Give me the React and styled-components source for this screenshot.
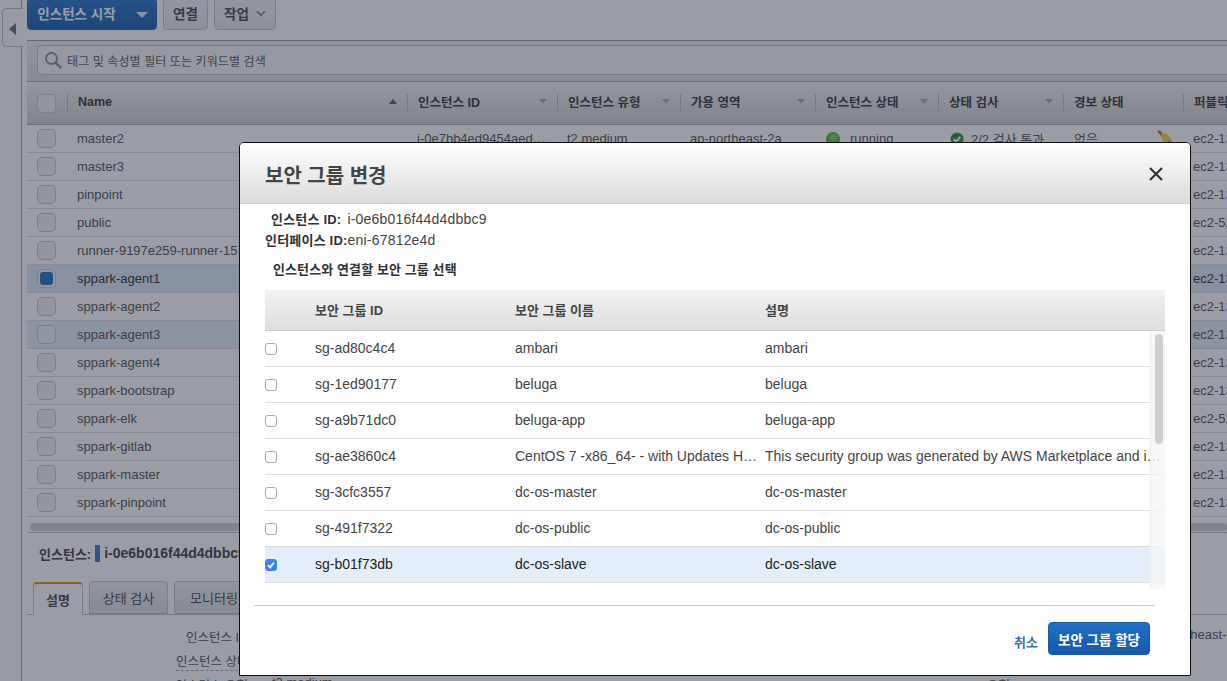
import React from "react"
import styled, { createGlobalStyle } from "styled-components"

const GlobalStyle = createGlobalStyle`
html, body {
    margin: 0;
    padding: 0;
    overflow: hidden;
    background: #fff;
    font-family: "Liberation Sans", "Noto Sans CJK KR", sans-serif;
    color: #444;
}
* { box-sizing: border-box; }
`;

const COLUMNS = "40px 340px 150px 123px 135px 123px 125px 120px 1fr";

const Page = styled.div`
position: relative;
display: flex;
width: 1227px;
height: 681px;
overflow: hidden;
background: #fff;
`;

const SideStrip = styled.div`
flex: 0 0 22px;
min-width: 0;
padding-top: 8px;
background: #fbfbfb;
border-right: 1px solid #aaa;
`;

const SideToggle = styled.div`
position: relative;
display: flex;
align-items: center;
width: 21px;
height: 39px;
margin-left: 2px;
padding-left: 6px;
background: #fbfbfb;
border: 1px solid #bbb;
border-right: none;
border-radius: 5px 0 0 5px;
`;

const LeftTriangle = styled.span`
width: 0;
height: 0;
margin-top: 2px;
border-top: 6px solid transparent;
border-bottom: 6px solid transparent;
border-right: 7px solid #666;
`;

const Main = styled.div`
flex: 1;
min-width: 0;
padding-left: 5px;
`;

const Toolbar = styled.div`
display: flex;
align-items: flex-end;
gap: 6px;
height: 31px;
padding-bottom: 1px;
`;

const StartButton = styled.div`
display: flex;
align-items: center;
height: 32px;
width: 130px;
color: #fff;
font-size: 13.5px;
font-weight: bold;
background: linear-gradient(#2070c8, #1459ab);
border: 1px solid #1a5aa5;
border-radius: 4px;
`;

const StartLabel = styled.span`
flex: 0 0 98px;
height: 100%;
line-height: 32px;
text-align: center;
border-right: 1px solid #2468b4;
`;

const StartCaret = styled.span`
width: 0;
height: 0;
margin: 2px 0 0 10px;
border-left: 6px solid transparent;
border-right: 6px solid transparent;
border-top: 6px solid #d8e6f5;
`;

const ToolButton = styled.div`
display: flex;
align-items: center;
justify-content: center;
gap: 7px;
height: 32px;
width: ${p => p.$width}px;
padding-bottom: 2px;
font-size: 13.5px;
font-weight: bold;
color: #444;
background: linear-gradient(#f4f4f4, #e6e6e6);
border: 1px solid #c4c4c4;
border-radius: 4px;
`;

const SearchPanel = styled.div`
display: flex;
align-items: flex-start;
height: 42px;
margin-top: 9px;
padding: 4px 0 0 10px;
background: linear-gradient(#efefef, #dddddd);
border-top: 1px solid #999;
border-bottom: 1px solid #aaa;
`;

const SearchInput = styled.div`
display: flex;
align-items: center;
gap: 5px;
width: 100%;
height: 30px;
padding-left: 6px;
font-size: 12px;
letter-spacing: 0.1px;
color: #555;
background: #f7f7f7;
border: 1px solid #c8c8c8;
border-right: none;
border-radius: 4px 0 0 4px;
`;

const HeaderRow = styled.div`
display: grid;
grid-template-columns: ${COLUMNS};
height: 43px;
background: linear-gradient(#f3f3f3, #cfcfcf);
border-bottom: 1px solid #aaa;
`;

const HeaderCell = styled.div`
position: relative;
display: flex;
align-items: center;
justify-content: space-between;
padding: 0 10px 3px 11px;
font-size: 12.5px;
font-weight: bold;
color: #333;
white-space: nowrap;
&::before {
    content: "";
    position: absolute;
    left: 0;
    top: 12px;
    bottom: 12px;
    width: 1px;
    background: #bbb;
}
`;

const CheckCell = styled.div`
display: flex;
align-items: center;
padding-left: 10px;
`;

const SortArrow = styled.span`
width: 0;
height: 0;
border-left: 4px solid transparent;
border-right: 4px solid transparent;
${p => p.$up ? "border-bottom: 5px solid #555;" : "border-top: 5px solid #aaa;"}
`;

const BigCheck = styled.span`
display: flex;
align-items: center;
justify-content: center;
width: 19px;
height: 19px;
background: #f1f1f1;
border: 1px solid #c6c6c6;
border-radius: 5px;
`;

const BigCheckFill = styled.span`
width: 13px;
height: 13px;
background: #1f6cc4;
border-radius: 3px;
`;

const Row = styled.div`
display: grid;
grid-template-columns: ${COLUMNS};
height: 28px;
font-size: 13px;
background: ${p => p.$selected === 2 ? "#dbe9f4" : p.$selected === 1 ? "#e2eef7" : "#fff"};
color: ${p => p.$selected === 2 ? "#2a2a2a" : "#4c4c4c"};
border-bottom: 1px solid #dcdcdc;
`;

const Cell = styled.div`
display: flex;
align-items: center;
gap: ${p => p.$gap || 0}px;
padding-left: ${p => p.$pad || 10}px;
white-space: nowrap;
overflow: hidden;
`;

const AlarmCell = styled(Cell)`
justify-content: space-between;
padding-right: 9px;
`;

const StatusDot = styled.span`
flex: none;
width: 14px;
height: 14px;
border-radius: 50%;
background: radial-gradient(circle at 50% 35%, #7fdc5a, #2f9a1e 75%);
`;

const ScrollTrack = styled.div`
height: 13px;
margin-top: 2px;
padding: 4px 0 0 3px;
`;

const ScrollThumb = styled.div`
width: 100%;
height: 8px;
background: #d0d0d0;
border-radius: 4px;
`;

const BottomPanel = styled.div`
border-top: 1px solid #bbb;
`;

const InstanceLine = styled.div`
display: flex;
align-items: center;
gap: 4px;
height: 40px;
padding: 0 0 0 12px;
font-size: 13px;
font-weight: bold;
color: #3c3c3c;
white-space: nowrap;
`;

const InstanceBar = styled.span`
width: 5px;
height: 17px;
background: #2f78c0;
`;

const InstanceId = styled.span`
font-size: 14px;
`;

const Tabs = styled.div`
display: flex;
align-items: flex-end;
gap: 6px;
height: 42px;
padding-left: 6px;
border-bottom: 1px solid #bbb;
`;

const Tab = styled.div`
display: flex;
align-items: center;
justify-content: center;
width: ${p => p.$width}px;
height: 33px;
margin-bottom: ${p => p.$active ? "-1px" : "0"};
font-size: 13px;
font-weight: ${p => p.$active ? "bold" : "normal"};
color: #444;
background: ${p => p.$active ? "#fff" : "linear-gradient(#f0f0f0, #dcdcdc)"};
border: 1px solid #c4c4c4;
border-top: ${p => p.$active ? "2px solid #e68a00" : "1px solid #c4c4c4"};
border-bottom: ${p => p.$active ? "none" : "1px solid #c4c4c4"};
border-radius: 4px 4px 0 0;
`;

const DetailGrid = styled.div`
display: grid;
grid-template-columns: 221px 673px 89px 1fr;
padding-top: 10px;
font-size: 13px;
color: #4c4c4c;
white-space: nowrap;
`;

const DetailLabel = styled.div`
height: ${p => p.$height}px;
padding-top: ${p => p.$top || 2}px;
font-size: 12.5px;
text-align: right;
${p => p.$dashed && "margin-left: 149px; border-bottom: 1px dashed #aaa;"}
`;

const DetailValue = styled.div`
padding: ${p => p.$top || 2}px 0 0 24px;
`;

const RightValue = styled.div`
padding: ${p => p.$top || 2}px 0 0 139px;
`;

const Overlay = styled.div`
position: absolute;
inset: 0;
background: rgba(44, 50, 67, 0.48);
`;

const Dialog = styled.div`
position: absolute;
left: 239px;
top: 142px;
display: flex;
flex-direction: column;
width: 952px;
height: 534px;
background: #fff;
border: 1px solid #111;
border-radius: 5px 5px 0 0;
`;

const DialogHeader = styled.div`
display: flex;
flex: none;
align-items: center;
justify-content: space-between;
height: 61px;
padding: 2px 27px 0 25px;
background: linear-gradient(#fff, #dbdbdb);
border-bottom: 1px solid #ccc;
border-radius: 4px 4px 0 0;
`;

const DialogTitle = styled.div`
font-size: 20px;
font-weight: bold;
color: #444;
`;

const DialogBody = styled.div`
flex: 1;
padding: 4px 25px 0;
`;

const InfoLine = styled.div`
display: flex;
align-items: center;
height: 21px;
padding-left: ${p => p.$indent}px;
font-size: 14px;
letter-spacing: 0.2px;
color: #444;
`;

const InfoLabel = styled.b`
font-size: 13px;
margin-right: ${p => p.$gap || 0}px;
color: #333;
`;

const SectionLabel = styled.div`
height: 22px;
margin-top: 8px;
padding: 3px 0 0 8px;
font-size: 13px;
letter-spacing: 0.1px;
line-height: 18px;
font-weight: bold;
color: #333;
`;

const GroupHeader = styled.div`
display: grid;
grid-template-columns: 50px 200px 250px 400px;
align-items: center;
height: 41px;
margin-top: 10px;
padding-bottom: 2px;
font-size: 13px;
font-weight: bold;
color: #444;
background: linear-gradient(#f2f2f2, #dedede);
border-bottom: 1px solid #ccc;
`;

const GroupScroll = styled.div`
position: relative;
height: 258px;
overflow: hidden;
`;

const GroupRow = styled.div`
display: grid;
grid-template-columns: 50px 200px 250px 400px;
align-items: center;
height: 36px;
padding-bottom: 2px;
font-size: 14px;
color: ${p => p.$checked ? "#222" : "#444"};
background: ${p => p.$checked ? "#e4eefb" : "#fff"};
border-bottom: 1px solid #ddd;
`;

const GroupCell = styled.div`
padding-right: ${p => p.$pad || 8}px;
white-space: nowrap;
overflow: hidden;
text-overflow: ellipsis;
`;

const Check = styled.span`
display: flex;
align-items: center;
justify-content: center;
width: 12px;
height: 12px;
margin-top: 2px;
background: ${p => p.$checked ? "#3a82f6" : "#fff"};
border: 1px solid ${p => p.$checked ? "#3a82f6" : "#a9a9a9"};
border-radius: 3px;
`;

const Track = styled.div`
position: absolute;
top: 0;
right: 0;
bottom: 0;
width: 15px;
padding: 3px 0 0 4px;
background: rgba(246, 246, 246, 0.75);
border-left: 1px solid #eee;
`;

const Thumb = styled.div`
width: 8px;
height: 110px;
background: #cfcfcf;
border-radius: 4px;
`;

const FooterLine = styled.div`
flex: none;
height: 1px;
margin: 0 35px 0 14px;
background: #ccc;
`;

const DialogFooter = styled.div`
display: flex;
flex: none;
align-items: flex-start;
justify-content: flex-end;
gap: 10px;
height: 69px;
padding: 16px 40px 0 0;
`;

const CancelLink = styled.span`
margin-top: 10px;
font-size: 13px;
font-weight: bold;
color: #3f6fc0;
`;

const PrimaryButton = styled.div`
display: flex;
align-items: center;
justify-content: center;
width: 102px;
height: 33px;
font-size: 13.5px;
font-weight: bold;
color: #fff;
background: linear-gradient(#2070c8, #1459ab);
border: 1px solid #1a5aa5;
border-radius: 4px;
`;

const SearchIcon = () => (
    <svg width="18" height="18" viewBox="0 0 18 18" fill="none">
        <circle cx="7.5" cy="7.5" r="5.5" stroke="#8a8a8a" strokeWidth="1.8" />
        <path d="M11.5 11.5L16.5 16.5" stroke="#8a8a8a" strokeWidth="2.4" strokeLinecap="round" />
    </svg>
);

const ChevronDown = () => (
    <svg width="10" height="7" viewBox="0 0 10 7" fill="none">
        <path d="M1 1.2L5 5.2L9 1.2" stroke="#777" strokeWidth="1.6" />
    </svg>
);

const CheckBadge = () => (
    <svg width="14" height="14" viewBox="0 0 14 14" style={{ flex: "none" }}>
        <circle cx="7" cy="7" r="6.5" fill="#1f8a3a" />
        <path d="M3.6 7.2L6 9.6L10.4 4.8" fill="none" stroke="#fff" strokeWidth="2" />
    </svg>
);

const BellIcon = () => (
    <svg width="18" height="18" viewBox="0 0 18 18" style={{ flex: "none" }}>
        <path d="M1 1L4 0.5L7 4L5 6Z" fill="#a87a20" />
        <path d="M5 4.5L10 3.5C13 5 15 9 16.5 11.5L8 14C7 10 5 7 5 4.5Z" fill="#f5d327" />
        <path d="M12 11H14V13H16V15H14V17H12V15H10V13H12Z" fill="#2fa32f" />
    </svg>
);

const SmallTick = () => (
    <svg width="10" height="10" viewBox="0 0 10 10" fill="none">
        <path d="M2 5.2L4.2 7.4L8 2.6" stroke="#fff" strokeWidth="1.7" />
    </svg>
);

const CloseIcon = () => (
    <svg width="14" height="14" viewBox="0 0 14 14" fill="none">
        <path d="M1 1L13 13M13 1L1 13" stroke="#333" strokeWidth="2.2" />
    </svg>
);

const columns = [
    { label: "Name", arrow: "up" },
    { label: "인스턴스 ID", arrow: "down" },
    { label: "인스턴스 유형", arrow: "down" },
    { label: "가용 영역", arrow: "down" },
    { label: "인스턴스 상태", arrow: "down" },
    { label: "상태 검사", arrow: "down" },
    { label: "경보 상태" },
    { label: "퍼블릭 DNS" },
];

const instances = [
    { name: "master2", dns: "ec2-13", full: true },
    { name: "master3", dns: "ec2-13" },
    { name: "pinpoint", dns: "ec2-13" },
    { name: "public", dns: "ec2-52" },
    { name: "runner-9197e259-runner-15", dns: "ec2-13" },
    { name: "sppark-agent1", dns: "ec2-13", selected: 2 },
    { name: "sppark-agent2", dns: "ec2-13" },
    { name: "sppark-agent3", dns: "ec2-13", selected: 1 },
    { name: "sppark-agent4", dns: "ec2-13" },
    { name: "sppark-bootstrap", dns: "ec2-13" },
    { name: "sppark-elk", dns: "ec2-52" },
    { name: "sppark-gitlab", dns: "ec2-13" },
    { name: "sppark-master", dns: "ec2-13" },
    { name: "sppark-pinpoint", dns: "ec2-13" },
];

const groups = [
    { id: "sg-ad80c4c4", name: "ambari", desc: "ambari" },
    { id: "sg-1ed90177", name: "beluga", desc: "beluga" },
    { id: "sg-a9b71dc0", name: "beluga-app", desc: "beluga-app" },
    {
        id: "sg-ae3860c4",
        name: "CentOS 7 -x86_64- - with Updates HVM-1602-AutogenByAWSMP-",
        desc: "This security group was generated by AWS Marketplace and is based on recommended settings",
    },
    { id: "sg-3cfc3557", name: "dc-os-master", desc: "dc-os-master" },
    { id: "sg-491f7322", name: "dc-os-public", desc: "dc-os-public" },
    { id: "sg-b01f73db", name: "dc-os-slave", desc: "dc-os-slave", checked: true },
];

const App = () => {
    return (
        <Page>
            <GlobalStyle />
            <SideStrip>
                <SideToggle><LeftTriangle /></SideToggle>
            </SideStrip>
            <Main>
                <Toolbar>
                    <StartButton>
                        <StartLabel>인스턴스 시작</StartLabel>
                        <StartCaret />
                    </StartButton>
                    <ToolButton $width={45}>연결</ToolButton>
                    <ToolButton $width={62}>작업 <ChevronDown /></ToolButton>
                </Toolbar>
                <SearchPanel>
                    <SearchInput>
                        <SearchIcon />
                        태그 및 속성별 필터 또는 키워드별 검색
                    </SearchInput>
                </SearchPanel>
                <HeaderRow>
                    <CheckCell><BigCheck /></CheckCell>
                    {columns.map(col => (
                        <HeaderCell key={col.label}>
                            {col.label}
                            {col.arrow && <SortArrow $up={col.arrow === "up"} />}
                        </HeaderCell>
                    ))}
                </HeaderRow>
                {instances.map(inst => (
                    <Row key={inst.name} $selected={inst.selected}>
                        <CheckCell>
                            <BigCheck>{inst.selected === 2 && <BigCheckFill />}</BigCheck>
                        </CheckCell>
                        <Cell>{inst.name}</Cell>
                        <Cell>{inst.full && "i-0e7bb4ed9454aed…"}</Cell>
                        <Cell>{inst.full && "t2.medium"}</Cell>
                        <Cell>{inst.full && "ap-northeast-2a"}</Cell>
                        <Cell $gap={10} $pad={11}>{inst.full && <><StatusDot />running</>}</Cell>
                        <Cell $gap={7} $pad={12}>{inst.full && <><CheckBadge />2/2 검사 통과</>}</Cell>
                        <AlarmCell $pad={11}>
                            {inst.full && <>없음<BellIcon /></>}
                        </AlarmCell>
                        <Cell>{inst.dns}</Cell>
                    </Row>
                ))}
                <ScrollTrack><ScrollThumb /></ScrollTrack>
                <BottomPanel>
                    <InstanceLine>
                        인스턴스:
                        <InstanceBar />
                        <InstanceId>i-0e6b016f44d4dbbc9</InstanceId>
                    </InstanceLine>
                    <Tabs>
                        <Tab $active $width={50}>설명</Tab>
                        <Tab $width={79}>상태 검사</Tab>
                        <Tab $width={80}>모니터링</Tab>
                    </Tabs>
                    <DetailGrid>
                        <DetailLabel $height={24}>인스턴스 ID</DetailLabel>
                        <DetailValue>i-0e6b016f44d4dbbc9</DetailValue>
                        <span />
                        <RightValue>ap-northeast-2a</RightValue>
                        <DetailLabel $height={22} $dashed>인스턴스 상태</DetailLabel>
                        <DetailValue>running</DetailValue>
                        <span />
                        <span />
                        <DetailLabel $height={22} $top={4}>인스턴스 유형</DetailLabel>
                        <DetailValue $top={4}>t2.medium</DetailValue>
                        <DetailLabel $height={22} $top={4}>IP 유형</DetailLabel>
                        <span />
                    </DetailGrid>
                </BottomPanel>
            </Main>
            <Overlay />
            <Dialog>
                <DialogHeader>
                    <DialogTitle>보안 그룹 변경</DialogTitle>
                    <CloseIcon />
                </DialogHeader>
                <DialogBody>
                    <InfoLine $indent={6}>
                        <InfoLabel $gap={6}>인스턴스 ID:</InfoLabel>
                        i-0e6b016f44d4dbbc9
                    </InfoLine>
                    <InfoLine $indent={0}>
                        <InfoLabel>인터페이스 ID:</InfoLabel>
                        eni-67812e4d
                    </InfoLine>
                    <SectionLabel>인스턴스와 연결할 보안 그룹 선택</SectionLabel>
                    <GroupHeader>
                        <span />
                        <span>보안 그룹 ID</span>
                        <span>보안 그룹 이름</span>
                        <span>설명</span>
                    </GroupHeader>
                    <GroupScroll>
                        {groups.map(group => (
                            <GroupRow key={group.id} $checked={group.checked}>
                                <Check $checked={group.checked}>
                                    {group.checked && <SmallTick />}
                                </Check>
                                <GroupCell>{group.id}</GroupCell>
                                <GroupCell>{group.name}</GroupCell>
                                <GroupCell $pad={1}>{group.desc}</GroupCell>
                            </GroupRow>
                        ))}
                        <Track><Thumb /></Track>
                    </GroupScroll>
                </DialogBody>
                <FooterLine />
                <DialogFooter>
                    <CancelLink>취소</CancelLink>
                    <PrimaryButton>보안 그룹 할당</PrimaryButton>
                </DialogFooter>
            </Dialog>
        </Page>
    )
}

export default App
